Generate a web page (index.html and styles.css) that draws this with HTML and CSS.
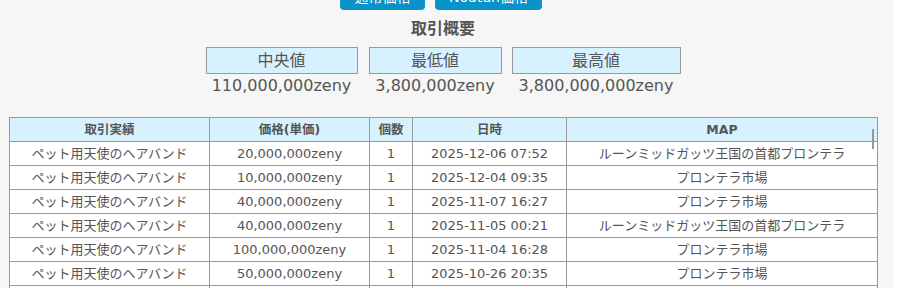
FILE: index.html
```html
<!DOCTYPE html>
<html lang="ja">
<head>
<meta charset="utf-8">
<link rel="stylesheet" href="styles.css">
</head>
<body>
<div class="page">
  <div class="content">
    <div class="btn-row">
      <span class="btn btn-a">通常価格</span>
      <span class="btn btn-b">Noatun価格</span>
    </div>
    <h2 class="title">取引概要</h2>
    <div class="summary">
      <div class="cell">
        <div class="label">中央値</div>
        <div class="value">110,000,000zeny</div>
      </div>
      <div class="cell">
        <div class="label">最低値</div>
        <div class="value">3,800,000zeny</div>
      </div>
      <div class="cell">
        <div class="label">最高値</div>
        <div class="value">3,800,000,000zeny</div>
      </div>
    </div>
    <div class="table-wrap">
      <table class="trades">
        <colgroup>
          <col class="c1"><col class="c2"><col class="c3"><col class="c4"><col class="c5">
        </colgroup>
        <thead>
          <tr><th>取引実績</th><th>価格(単価)</th><th>個数</th><th>日時</th><th>MAP</th></tr>
        </thead>
        <tbody>
          <tr><td class="item">ペット用天使のヘアバンド</td><td>20,000,000zeny</td><td>1</td><td>2025-12-06 07:52</td><td>ルーンミッドガッツ王国の首都プロンテラ</td></tr>
          <tr><td class="item">ペット用天使のヘアバンド</td><td>10,000,000zeny</td><td>1</td><td>2025-12-04 09:35</td><td>プロンテラ市場</td></tr>
          <tr><td class="item">ペット用天使のヘアバンド</td><td>40,000,000zeny</td><td>1</td><td>2025-11-07 16:27</td><td>プロンテラ市場</td></tr>
          <tr><td class="item">ペット用天使のヘアバンド</td><td>40,000,000zeny</td><td>1</td><td>2025-11-05 00:21</td><td>ルーンミッドガッツ王国の首都プロンテラ</td></tr>
          <tr><td class="item">ペット用天使のヘアバンド</td><td>100,000,000zeny</td><td>1</td><td>2025-11-04 16:28</td><td>プロンテラ市場</td></tr>
          <tr><td class="item">ペット用天使のヘアバンド</td><td>50,000,000zeny</td><td>1</td><td>2025-10-26 20:35</td><td>プロンテラ市場</td></tr>
          <tr><td class="item">ペット用天使のヘアバンド</td><td>30,000,000zeny</td><td>1</td><td>2025-10-20 12:10</td><td>プロンテラ市場</td></tr>
        </tbody>
      </table>
      <span class="scroll-mark"></span>
    </div>
  </div>
</div>
</body>
</html>
```
FILE: styles.css
```css
html, body {
  margin: 0;
  padding: 0;
  background: #ffffff;
  overflow: hidden;
}
body {
  font-family: "DejaVu Sans", "Noto Sans CJK JP", sans-serif;
  color: #555555;
}
.page {
  width: 893px;
  height: 288px;
  background: #f6f6f6;
  overflow: hidden;
}
.content {
  width: 868px;
  margin-left: 9px;
}
.btn-row {
  display: flex;
  justify-content: center;
  gap: 10px;
  margin-top: -18px;
  height: 28px;
}
.btn {
  display: flex;
  align-items: center;
  justify-content: center;
  height: 28px;
  background: #0a93c9;
  color: #ffffff;
  border-radius: 4px;
  font-size: 14px;
  box-sizing: border-box;
}
.btn-a { width: 85px; margin-left: -4px; }
.btn-b { width: 107px; }
.title {
  margin: 9px 0 0;
  font-size: 16px;
  line-height: 20px;
  font-weight: bold;
  text-align: center;
  color: #555555;
}
.summary {
  display: grid;
  grid-template-columns: 152px 133px 168px;
  column-gap: 11px;
  justify-content: center;
  margin-top: 8px;
}
.summary .cell:nth-child(3) { margin-left: -1px; }
.label {
  height: 27px;
  box-sizing: border-box;
  border: 1px solid #999999;
  background: #d8f1fe;
  font-size: 16px;
  line-height: 25px;
  text-align: center;
  color: #555555;
}
.value {
  font-size: 16px;
  line-height: 24px;
  text-align: center;
  color: #555555;
  white-space: nowrap;
}
.table-wrap {
  position: relative;
  margin-top: 19px;
}
.trades {
  width: 868px;
  border-collapse: collapse;
  table-layout: fixed;
  font-size: 13px;
  color: #555555;
}
.c1 { width: 200px; }
.c2 { width: 160px; }
.c3 { width: 43px; }
.c4 { width: 154px; }
.c5 { width: 311px; }
.trades th, .trades td {
  border: 1px solid #999999;
  height: 23px;
  padding: 0;
  text-align: center;
  white-space: nowrap;
  overflow: hidden;
  line-height: 22px;
}
.trades th {
  background: #d8f1fe;
  font-weight: bold;
  font-size: 12.5px;
}
.trades td {
  background: #ffffff;
}
.scroll-mark {
  position: absolute;
  left: 863px;
  top: 12px;
  width: 2px;
  height: 20px;
  background: #999999;
}
```
